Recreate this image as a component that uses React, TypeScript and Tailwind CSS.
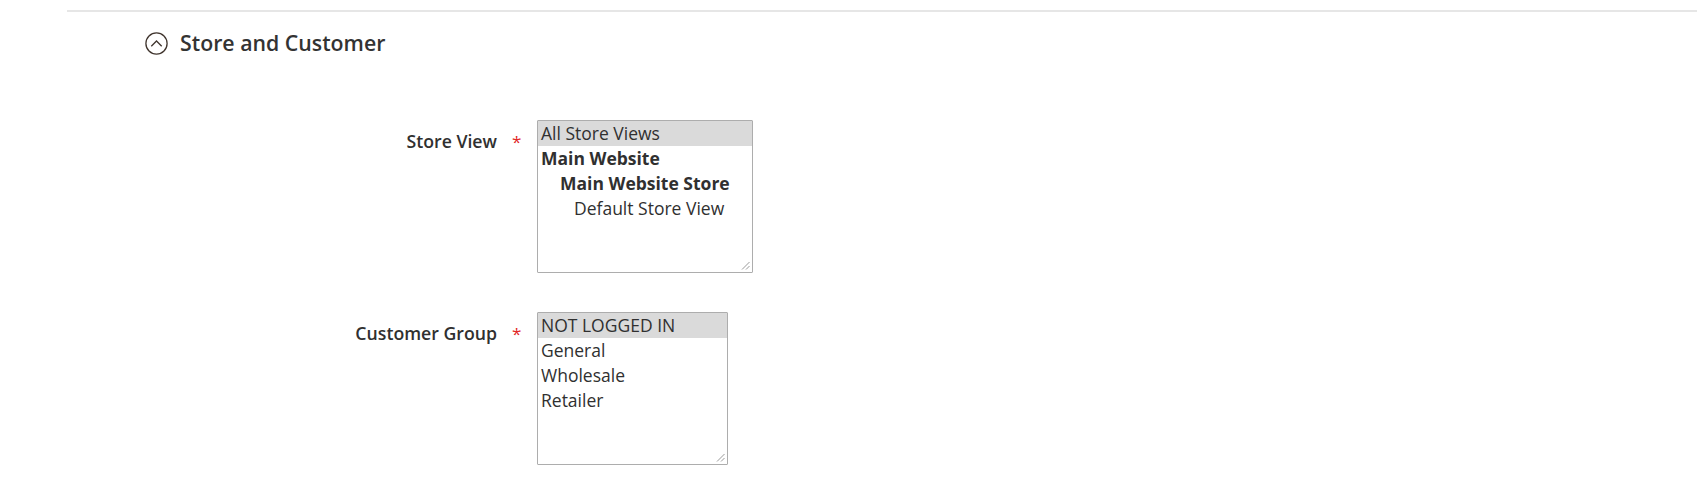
import React from "react";

type Opt = { text: string; bold?: boolean; indent?: number; selected?: boolean };

function Grip() {
  return (
    <svg className="absolute right-[2px] bottom-[2px]" width="9" height="9" viewBox="0 0 9 9">
      <line x1="1" y1="8.5" x2="8.5" y2="1" stroke="#9a9a9a" strokeWidth="1" />
      <line x1="5" y1="8.5" x2="8.5" y2="5" stroke="#9a9a9a" strokeWidth="1" />
    </svg>
  );
}

function ListBox({ options, width }: { options: Opt[]; width: string }) {
  return (
    <div className={`relative ${width} h-[153px] border border-[#adadad] rounded-[1px] bg-white overflow-hidden`}>
      {options.map((o, i) => (
        <div
          key={i}
          className={`h-[25px] leading-[25px] text-[17.5px] text-[#303030] whitespace-nowrap ${o.selected ? "bg-[#dadada]" : ""} ${o.bold ? "font-bold" : "font-normal"}`}
          style={{ paddingLeft: 3 + (o.indent ?? 0) }}
        >
          {o.text}
        </div>
      ))}
      <Grip />
    </div>
  );
}

function Row({ label, children }: { label: string; children: React.ReactNode }) {
  return (
    <div className="flex items-start">
      <div className="w-[497px] flex justify-end pt-[9px] text-[17.7px] leading-[25px] font-semibold text-[#303030]">
        {label}
      </div>
      <div className="w-[40px] pl-[15px] pt-[9px] text-[17px] leading-[25px] text-[#e22626]">*</div>
      {children}
    </div>
  );
}

export default function App() {
  return (
    <div className="w-[1702px] h-[504px] bg-white font-['Open_Sans',sans-serif] pt-[10px] overflow-hidden">
      <div className="ml-[67px] mr-[5px] h-[2px] bg-[#e6e6e6]" />
      <div className="flex items-center ml-[145px] mt-[19px] h-[24px] gap-[12px]">
        <svg width="23" height="23" viewBox="0 0 23 23">
          <circle cx="11.5" cy="11.5" r="10.6" fill="none" stroke="#41362f" strokeWidth="1.3" />
          <path d="M6.3 14.2 L11.5 9 L16.7 14.2" fill="none" stroke="#41362f" strokeWidth="1.3" />
        </svg>
        <span className="text-[21.3px] leading-[24px] font-semibold text-[#333333]">Store and Customer</span>
      </div>
      <div className="mt-[65px] flex flex-col gap-[39px]">
        <Row label="Store View">
          <ListBox
            width="w-[216px]"
            options={[
              { text: "All Store Views", selected: true },
              { text: "Main Website", bold: true },
              { text: "Main Website Store", bold: true, indent: 19 },
              { text: "Default Store View", indent: 33 },
            ]}
          />
        </Row>
        <Row label="Customer Group">
          <ListBox
            width="w-[191px]"
            options={[
              { text: "NOT LOGGED IN", selected: true },
              { text: "General" },
              { text: "Wholesale" },
              { text: "Retailer" },
            ]}
          />
        </Row>
      </div>
    </div>
  );
}
